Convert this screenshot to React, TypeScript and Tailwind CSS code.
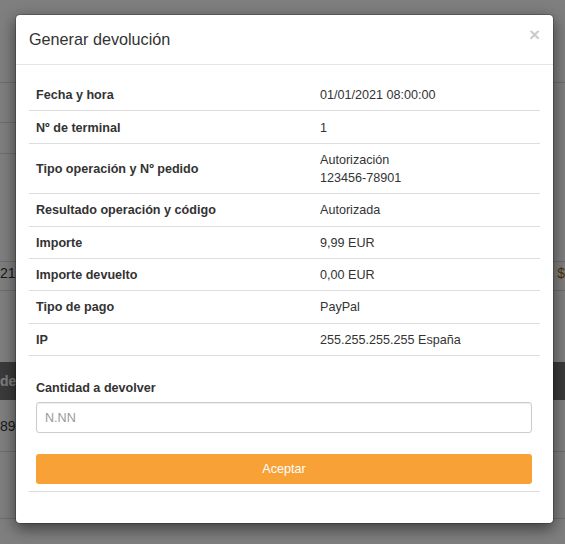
import { useState } from 'react';

interface Row {
  label: string;
  value: string[];
}

const rows: Row[] = [
  { label: 'Fecha y hora', value: ['01/01/2021 08:00:00'] },
  { label: 'Nº de terminal', value: ['1'] },
  { label: 'Tipo operación y Nº pedido', value: ['Autorización', '123456-78901'] },
  { label: 'Resultado operación y código', value: ['Autorizada'] },
  { label: 'Importe', value: ['9,99 EUR'] },
  { label: 'Importe devuelto', value: ['0,00 EUR'] },
  { label: 'Tipo de pago', value: ['PayPal'] },
  { label: 'IP', value: ['255.255.255.255 España'] },
];

function BackgroundPage() {
  return (
    <div className="w-[565px] h-[544px] bg-white text-[14px] leading-[20px] text-[#333] overflow-hidden">
      <div className="h-[83px] border-b border-[#dcdcdc]" />
      <div className="w-[40px] h-[40px] border-b border-[#dcdcdc]" />
      <div className="w-[40px] h-[31px] border-b border-[#dcdcdc]" />
      <div className="h-[108px] border-b border-[#dcdcdc]" />
      <div className="h-[29px] pt-[1px] flex items-start justify-between border-b border-[#dcdcdc]">
        <span>21</span>
        <span className="text-[#a0620f]">$</span>
      </div>
      <div className="h-[71px]" />
      <div className="h-[38px] bg-[#767676] flex items-center font-bold text-white">
        <span>de</span>
      </div>
      <div className="h-[52px] flex items-center border-b border-[#dcdcdc]">
        <span>89</span>
      </div>
      <div className="h-[67px] border-b border-[#dcdcdc]" />
    </div>
  );
}

export default function App() {
  const [amount, setAmount] = useState('');

  return (
    <div className="relative w-[565px] h-[544px] overflow-hidden font-['Liberation_Sans',Arial,sans-serif]">
      <BackgroundPage />

      <div className="absolute inset-0 bg-black/50 pt-[14px] pl-[15px]">
        <div className="w-[539px] h-[510px] bg-white rounded-[5px] border border-black/20 shadow-[0_5px_15px_rgba(0,0,0,0.5)] bg-clip-padding text-[#333]">
          <div className="relative px-[13px] pt-[13px] pb-[13px] border-b border-[#e5e5e5]">
            <h4 className="text-[16.2px] leading-[23px] text-[#333]">Generar devolución</h4>
            <button className="absolute right-[13px] top-[10px] text-[19px] leading-[19px] font-bold text-black opacity-20">
              ×
            </button>
          </div>

          <div className="px-[13px] pt-[14px]">
            <div className="text-[12.6px] leading-[18px]">
              {rows.map((row) => (
                <div key={row.label} className="flex border-b border-[#ddd]">
                  <div className="w-[284px] pl-[7px] pt-[7.2px] pb-[6.2px] font-bold flex items-center">
                    {row.label}
                  </div>
                  <div className="flex-1 pl-[7px] pt-[7.2px] pb-[6.2px]">
                    {row.value.map((v) => (
                      <div key={v}>{v}</div>
                    ))}
                  </div>
                </div>
              ))}
            </div>

            <div className="mt-[23px] pl-[7px] pr-[8px] text-[12.6px] leading-[18px]">
              <label className="block font-bold mb-[5px]">Cantidad a devolver</label>
              <input
                value={amount}
                onChange={(e) => setAmount(e.target.value)}
                placeholder="N.NN"
                className="block w-full h-[31px] px-[8px] border border-[#ccc] rounded-[3px] text-[12.6px] text-[#555] placeholder:text-[#999] shadow-[inset_0_1px_1px_rgba(0,0,0,0.075)] outline-none"
              />
              <button className="mt-[21px] w-full h-[30px] rounded-[3px] bg-[#f8a137] text-white text-[12.6px]">
                Aceptar
              </button>
            </div>

            <div className="mt-[7px] border-b border-[#ddd]" />
          </div>
        </div>
      </div>
    </div>
  );
}
